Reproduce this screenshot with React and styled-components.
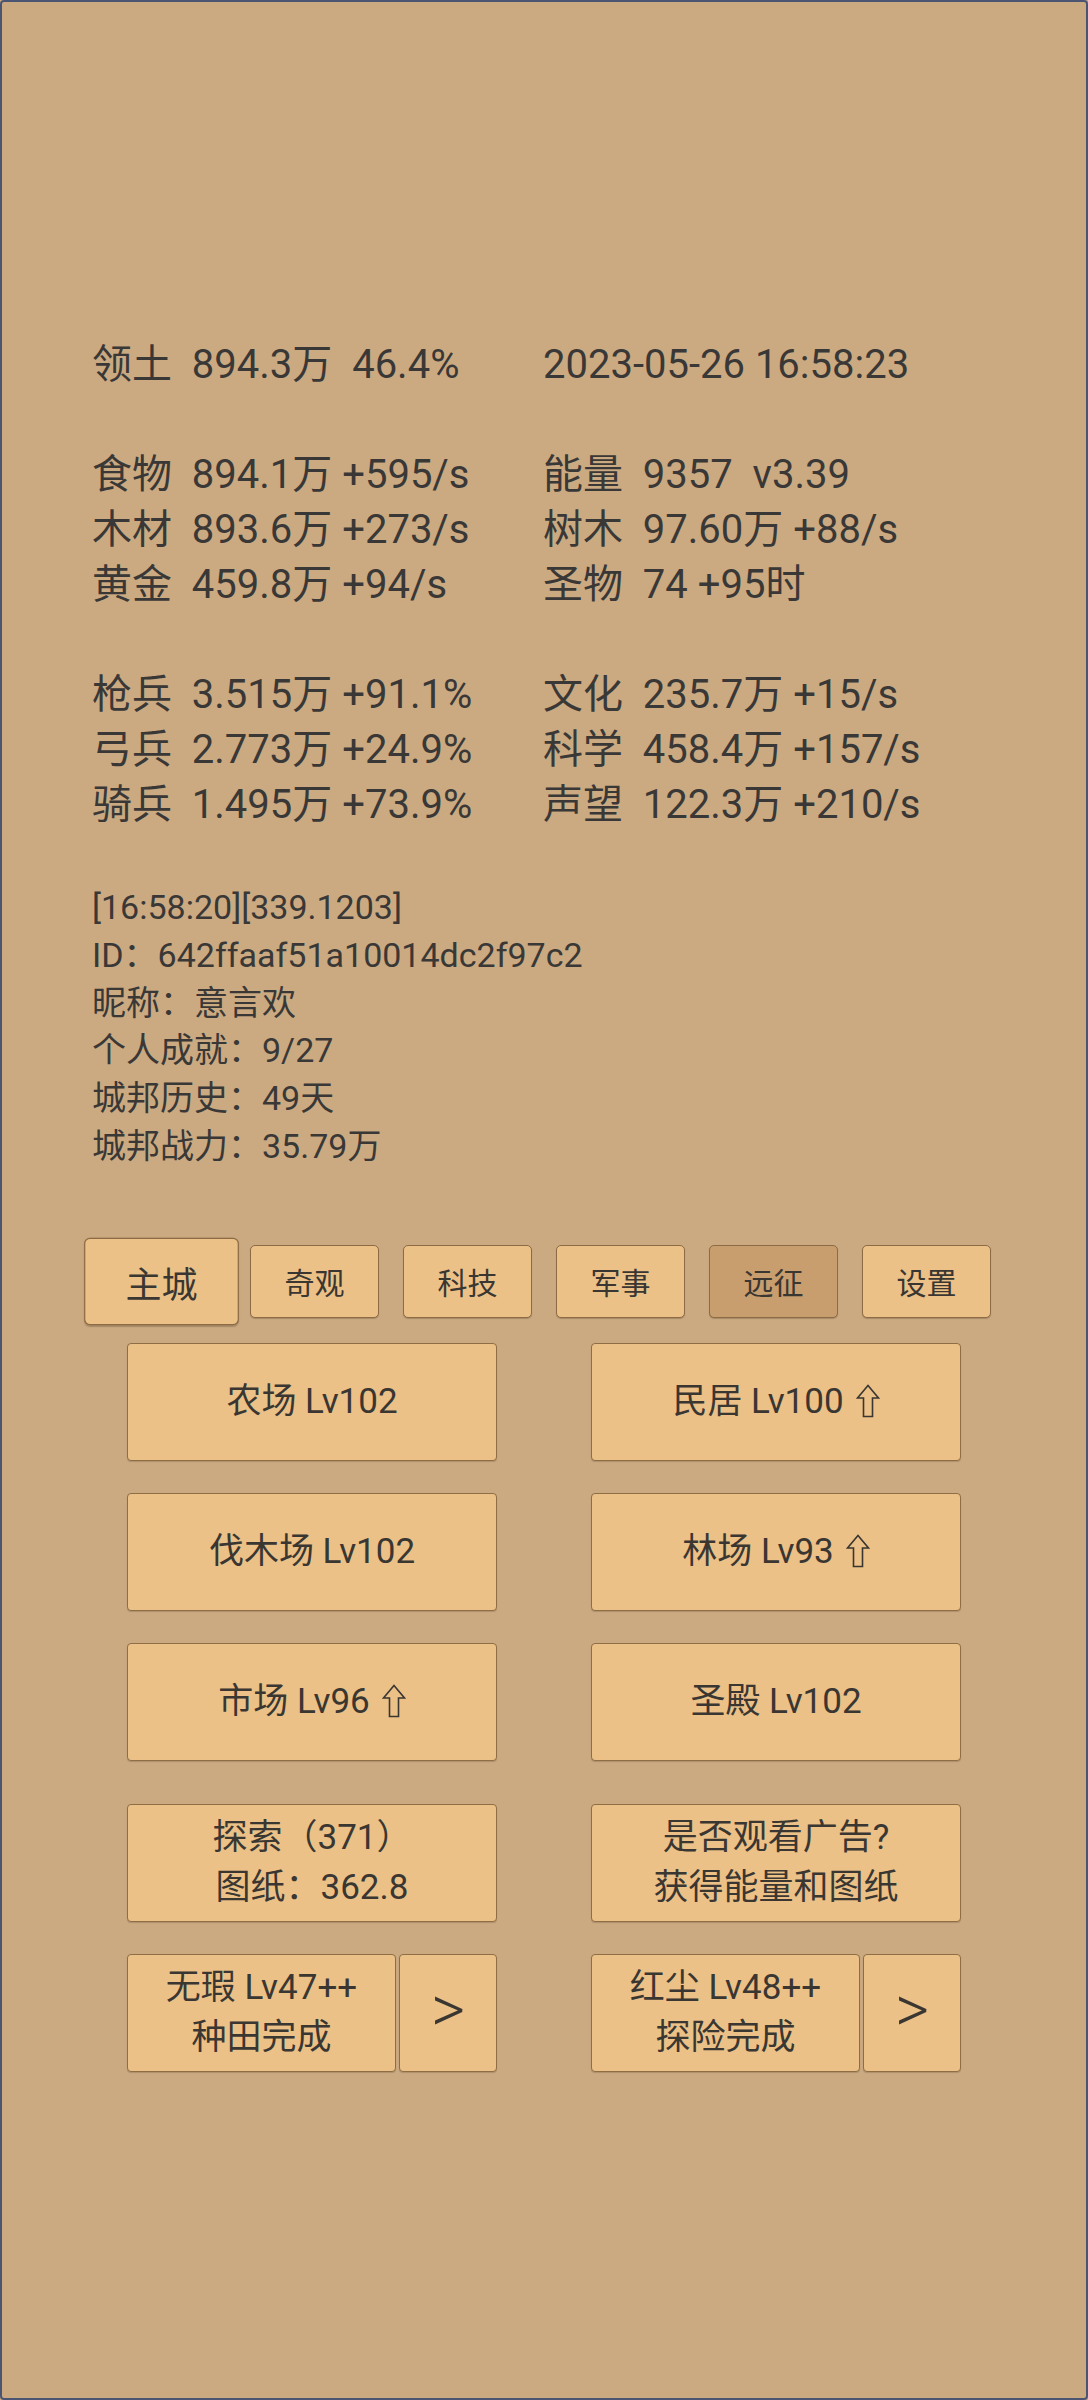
import React from "react";
import styled, { createGlobalStyle } from "styled-components";

const Global = createGlobalStyle`
  html, body { margin: 0; padding: 0; background: #cbaa82; }
  * { box-sizing: border-box; }
`;

const Page = styled.div`
  width: 1088px;
  min-height: 2400px;
  border: 2px solid #4b5571;
  border-radius: 4px;
  background: #cbaa82;
  padding-top: 335px;
  font-family: Roboto, "Noto Sans CJK SC", sans-serif;
  color: #3a3836;
`;

const StatsGrid = styled.div`
  display: grid;
  grid-template-columns: 451px auto;
  grid-auto-rows: 55px;
  padding-left: 90px;
  font-size: 40px;
  line-height: 55px;
  white-space: pre;
`;

const Stat = styled.div`
  display: flex;
  align-items: center;
`;

const BlankRow = styled.div`
  grid-column: 1 / -1;
`;

const Info = styled.div`
  margin-top: 52px;
  padding-left: 90px;
  font-size: 34px;
  line-height: 47.8px;
`;

const InfoLine = styled.div``;

const TabRow = styled.div`
  margin-top: 74px;
  display: flex;
  justify-content: center;
  align-items: center;
  gap: 24px;
  height: 73px;
`;

const Tab = styled.button`
  width: 129px;
  height: 73px;
  padding: 0;
  border: 1px solid #8c6b45;
  border-radius: 5px;
  background: ${(p) => (p.$dim ? "#c99e6e" : "#ebc187")};
  color: #3a3632;
  font-family: inherit;
  font-size: 30px;
  transform: ${(p) => (p.$selected ? "scale(1.2)" : "none")};
  box-shadow: 0 1px 1px rgba(60, 40, 20, 0.25);
`;

const BuildGrid = styled.div`
  display: grid;
  grid-template-columns: 370px 370px;
  grid-auto-rows: 118px;
  column-gap: 94px;
  row-gap: 32px;
  justify-content: center;
  margin-top: ${(p) => p.$top}px;
`;

const Btn = styled.button`
  width: 100%;
  height: 100%;
  padding: 0;
  border: 1px solid #8f6e46;
  border-radius: 4px;
  background: #ebc187;
  color: #3a3632;
  font-family: inherit;
  font-size: 35px;
  line-height: 50px;
  display: flex;
  flex-direction: column;
  align-items: center;
  justify-content: center;
  box-shadow: 0 1px 1px rgba(60, 40, 20, 0.2);
`;

const Label = styled.span`
  display: inline-flex;
  align-items: center;
`;

const UpIcon = styled.svg`
  width: 24px;
  height: 34px;
  margin-left: 12px;
  margin-top: -2px;
`;

const Pair = styled.div`
  display: flex;
  gap: 3px;
`;

const PairMain = styled(Btn)`
  flex: 0 0 269px;
`;

const Arrow = styled(Btn)`
  flex: 1;
  font-size: 66px;
  font-weight: 300;
  padding-bottom: 6px;
`;

function Up() {
  return (
    <UpIcon viewBox="0 0 24 34">
      <path
        d="M12 1.5 L22.5 14 H16.5 V32.5 H7.5 V14 H1.5 Z"
        fill="none"
        stroke="#3a3632"
        strokeWidth="1.6"
        strokeLinejoin="miter"
      />
    </UpIcon>
  );
}

const statRows = [
  [["领土", "894.3万  46.4%"], [null, "2023-05-26 16:58:23"]],
  null,
  [["食物", "894.1万 +595/s"], ["能量", "9357  v3.39"]],
  [["木材", "893.6万 +273/s"], ["树木", "97.60万 +88/s"]],
  [["黄金", "459.8万 +94/s"], ["圣物", "74 +95时"]],
  null,
  [["枪兵", "3.515万 +91.1%"], ["文化", "235.7万 +15/s"]],
  [["弓兵", "2.773万 +24.9%"], ["科学", "458.4万 +157/s"]],
  [["骑兵", "1.495万 +73.9%"], ["声望", "122.3万 +210/s"]],
];

const tabs = ["主城", "奇观", "科技", "军事", "远征", "设置"];

const buildings = [
  ["农场 Lv102", false],
  ["民居 Lv100", true],
  ["伐木场 Lv102", false],
  ["林场 Lv93", true],
  ["市场 Lv96", true],
  ["圣殿 Lv102", false],
];

function Cell({ item }) {
  const [label, value] = item;
  return <Stat>{label ? `${label}  ${value}` : value}</Stat>;
}

export default function App() {
  return (
    <>
      <Global />
      <Page>
        <StatsGrid>
          {statRows.map((row, i) =>
            row ? (
              <React.Fragment key={i}>
                <Cell item={row[0]} />
                <Cell item={row[1]} />
              </React.Fragment>
            ) : (
              <BlankRow key={i} />
            )
          )}
        </StatsGrid>

        <Info>
          <InfoLine>[16:58:20][339.1203]</InfoLine>
          <InfoLine>ID：642ffaaf51a10014dc2f97c2</InfoLine>
          <InfoLine>昵称：意言欢</InfoLine>
          <InfoLine>个人成就：9/27</InfoLine>
          <InfoLine>城邦历史：49天</InfoLine>
          <InfoLine>城邦战力：35.79万</InfoLine>
        </Info>

        <TabRow>
          {tabs.map((t, i) => (
            <Tab key={t} $selected={i === 0} $dim={t === "远征"}>
              {t}
            </Tab>
          ))}
        </TabRow>

        <BuildGrid $top={25}>
          {buildings.map(([name, up]) => (
            <Btn key={name}>
              <Label>
                {name}
                {up && <Up />}
              </Label>
            </Btn>
          ))}
        </BuildGrid>

        <BuildGrid $top={43}>
          <Btn>
            <span>探索（371）</span>
            <span>图纸：362.8</span>
          </Btn>
          <Btn>
            <span>是否观看广告?</span>
            <span>获得能量和图纸</span>
          </Btn>
          <Pair>
            <PairMain>
              <span>无瑕 Lv47++</span>
              <span>种田完成</span>
            </PairMain>
            <Arrow>&gt;</Arrow>
          </Pair>
          <Pair>
            <PairMain>
              <span>红尘 Lv48++</span>
              <span>探险完成</span>
            </PairMain>
            <Arrow>&gt;</Arrow>
          </Pair>
        </BuildGrid>
      </Page>
    </>
  );
}
